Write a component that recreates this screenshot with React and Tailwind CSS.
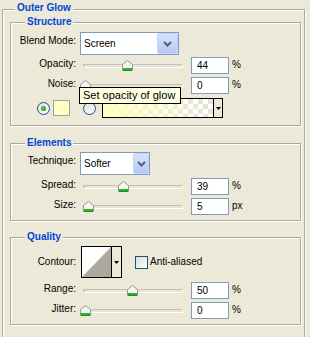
import React from 'react';

const groupBox = 'border border-[#ACA899] shadow-[inset_1px_1px_0_#fff,1px_1px_0_#fff]';

function Group({ title, className, children }) {
    return (
        <fieldset className={`${groupBox} w-[291px] ${className}`}>
            <legend className="ml-[14px] px-[2px] bg-[#ECE9D8] font-bold text-[#0046D5] leading-[12px]">
                {title}
            </legend>
            {children}
        </fieldset>
    );
}

function Label({ children, className = '' }) {
    return <span className={`w-[65px] shrink-0 text-right leading-[12px] ${className}`}>{children}</span>;
}

function Chevron() {
    return (
        <svg width="9" height="6" viewBox="0 0 9 6">
            <path d="M1 1l3.5 3.5L8 1" fill="none" stroke="#4D6185" strokeWidth="2" />
        </svg>
    );
}

function ArrowDown() {
    return (
        <svg width="5" height="3" viewBox="0 0 5 3">
            <path d="M0 0h5L2.5 3z" fill="#000" />
        </svg>
    );
}

function Select({ label, value, width, button }) {
    return (
        <div className="flex items-start h-[23px]">
            <Label className="mt-[3px]">{label}</Label>
            <div className={`ml-[4px] flex items-center h-[23px] ${width} border border-[#7F9DB9] bg-white`}>
                <span className="flex-1 pl-[3px] leading-[12px]">{value}</span>
                <div className={`${button} h-[21px] flex items-center justify-center rounded-[2px] border border-[#C3D3FD] bg-[linear-gradient(#D6E1FC,#B6C9F5)]`}>
                    <Chevron />
                </div>
            </div>
        </div>
    );
}

function Thumb({ left }) {
    return (
        <svg className="absolute top-[3px]" style={{ left }} width="11" height="11" viewBox="0 0 11 11">
            <path d="M0.5 4.5L5.5 0.5L10.5 4.5V10.5H0.5Z" fill="#F5F4EF" stroke="#8E9A8E" />
            <rect x="1" y="8" width="9" height="2" fill="#2BB12B" />
            <rect x="1" y="10" width="9" height="1" fill="#1E8E1E" />
        </svg>
    );
}

function SliderRow({ label, value, pos, unit, className = '' }) {
    return (
        <div className={`flex items-start h-[17px] ${className}`}>
            <Label className="mt-[1px]">{label}</Label>
            <div className="relative ml-[4px] w-[103px] h-[17px]">
                <div className="ml-[3px] mt-[7px] h-[4px] border border-[#C4C2B6] border-b-white border-r-white bg-[#E6E4DB]" />
                <Thumb left={pos} />
            </div>
            <div className="ml-[8px] w-[38px] h-[17px] border border-[#7F9DB9] bg-white pl-[5px] pt-[1px] leading-[14px]">
                {value}
            </div>
            <span className="ml-[3px] leading-[15px]">{unit}</span>
        </div>
    );
}

function Radio({ checked }) {
    return (
        <svg width="13" height="13" viewBox="0 0 13 13">
            <defs>
                <linearGradient id="radioFill" x1="0" y1="0" x2="1" y2="1">
                    <stop offset="0" stopColor="#DCDCD7" />
                    <stop offset="1" stopColor="#FFFFFF" />
                </linearGradient>
            </defs>
            <circle cx="6.5" cy="6.5" r="6" fill="url(#radioFill)" stroke="#1C5180" />
            {checked && <circle cx="6.5" cy="6.5" r="2.5" fill="#2DA82D" />}
            {checked && <circle cx="6" cy="6" r="1" fill="#7EDB7E" />}
        </svg>
    );
}

export default function App() {
    return (
        <div className="relative w-[310px] h-[337px] overflow-hidden bg-[#ECE9D8] pt-[2px] pl-[2px] text-[10px] text-black font-['Liberation_Sans',Arial,sans-serif]">
            <fieldset className={`${groupBox} w-[303px] h-[400px] pl-[7px]`}>
                <legend className="ml-[5px] px-[2px] pb-[2px] bg-[#ECE9D8] font-bold text-[#0046D5] leading-[12px]">
                    Outer Glow
                </legend>

                <Group title="Structure" className="pt-[4px] pb-[7px]">
                    <Select label="Blend Mode:" value="Screen" width="w-[99px]" button="w-[21px]" />
                    <SliderRow label="Opacity:" value="44" pos={42} unit="%" className="mt-[2px]" />
                    <SliderRow label="Noise:" value="0" pos={0} unit="%" className="mt-[3px]" />
                    <div className="mt-[4px] flex items-center h-[20px] pl-[26px]">
                        <Radio checked />
                        <div className="ml-[3px] w-[17px] h-[16px] border border-[#A3A39B] bg-[#FFFFC4]" />
                        <div className="ml-[13px]">
                            <Radio />
                        </div>
                        <div className="ml-[6px] flex w-[121px] h-[20px] border border-black">
                            <div className="flex-1 bg-[linear-gradient(to_right,#FFFFBE,#FFFFBE00),repeating-conic-gradient(#E2E2E2_0_25%,#FFFFFF_0_50%)] bg-[length:auto,10px_10px]" />
                            <div className="w-[9px] border-l border-black flex items-center justify-center bg-[#ECE9D8]">
                                <ArrowDown />
                            </div>
                        </div>
                    </div>
                </Group>

                <Group title="Elements" className="mt-[11px] pt-[3px] pb-[5px]">
                    <Select label="Technique:" value="Softer" width="w-[70px]" button="w-[16px]" />
                    <SliderRow label="Spread:" value="39" pos={38} unit="%" className="mt-[3px]" />
                    <SliderRow label="Size:" value="5" pos={3} unit="px" className="mt-[3px]" />
                </Group>

                <Group title="Quality" className="mt-[10px] pt-[3px] pb-[5px]">
                    <div className="flex items-center h-[32px]">
                        <Label>Contour:</Label>
                        <div className="ml-[5px] flex w-[41px] h-[32px] border border-black bg-white">
                            <svg className="flex-1" width="29" height="30" viewBox="0 0 29 30" preserveAspectRatio="none">
                                <path d="M0 30L29 0V30Z" fill="#ADA99C" />
                            </svg>
                            <div className="w-[10px] border-l border-black flex items-center justify-center bg-[#ECE9D8]">
                                <ArrowDown />
                            </div>
                        </div>
                        <div className="ml-[13px] w-[13px] h-[13px] border border-[#1C5180] bg-[linear-gradient(135deg,#DCDCD7,#FFFFFF)]" />
                        <span className="ml-[2px] leading-[12px]">Anti-aliased</span>
                    </div>
                    <SliderRow label="Range:" value="50" pos={47} unit="%" className="mt-[4px]" />
                    <SliderRow label="Jitter:" value="0" pos={0} unit="%" className="mt-[3px]" />
                </Group>
            </fieldset>

            <div className="absolute left-[79px] top-[87px] w-[102px] h-[17px] border border-black bg-[#FFFFE1] pl-[3px] text-[11px] leading-[15px]">
                Set opacity of glow
            </div>
        </div>
    );
}
